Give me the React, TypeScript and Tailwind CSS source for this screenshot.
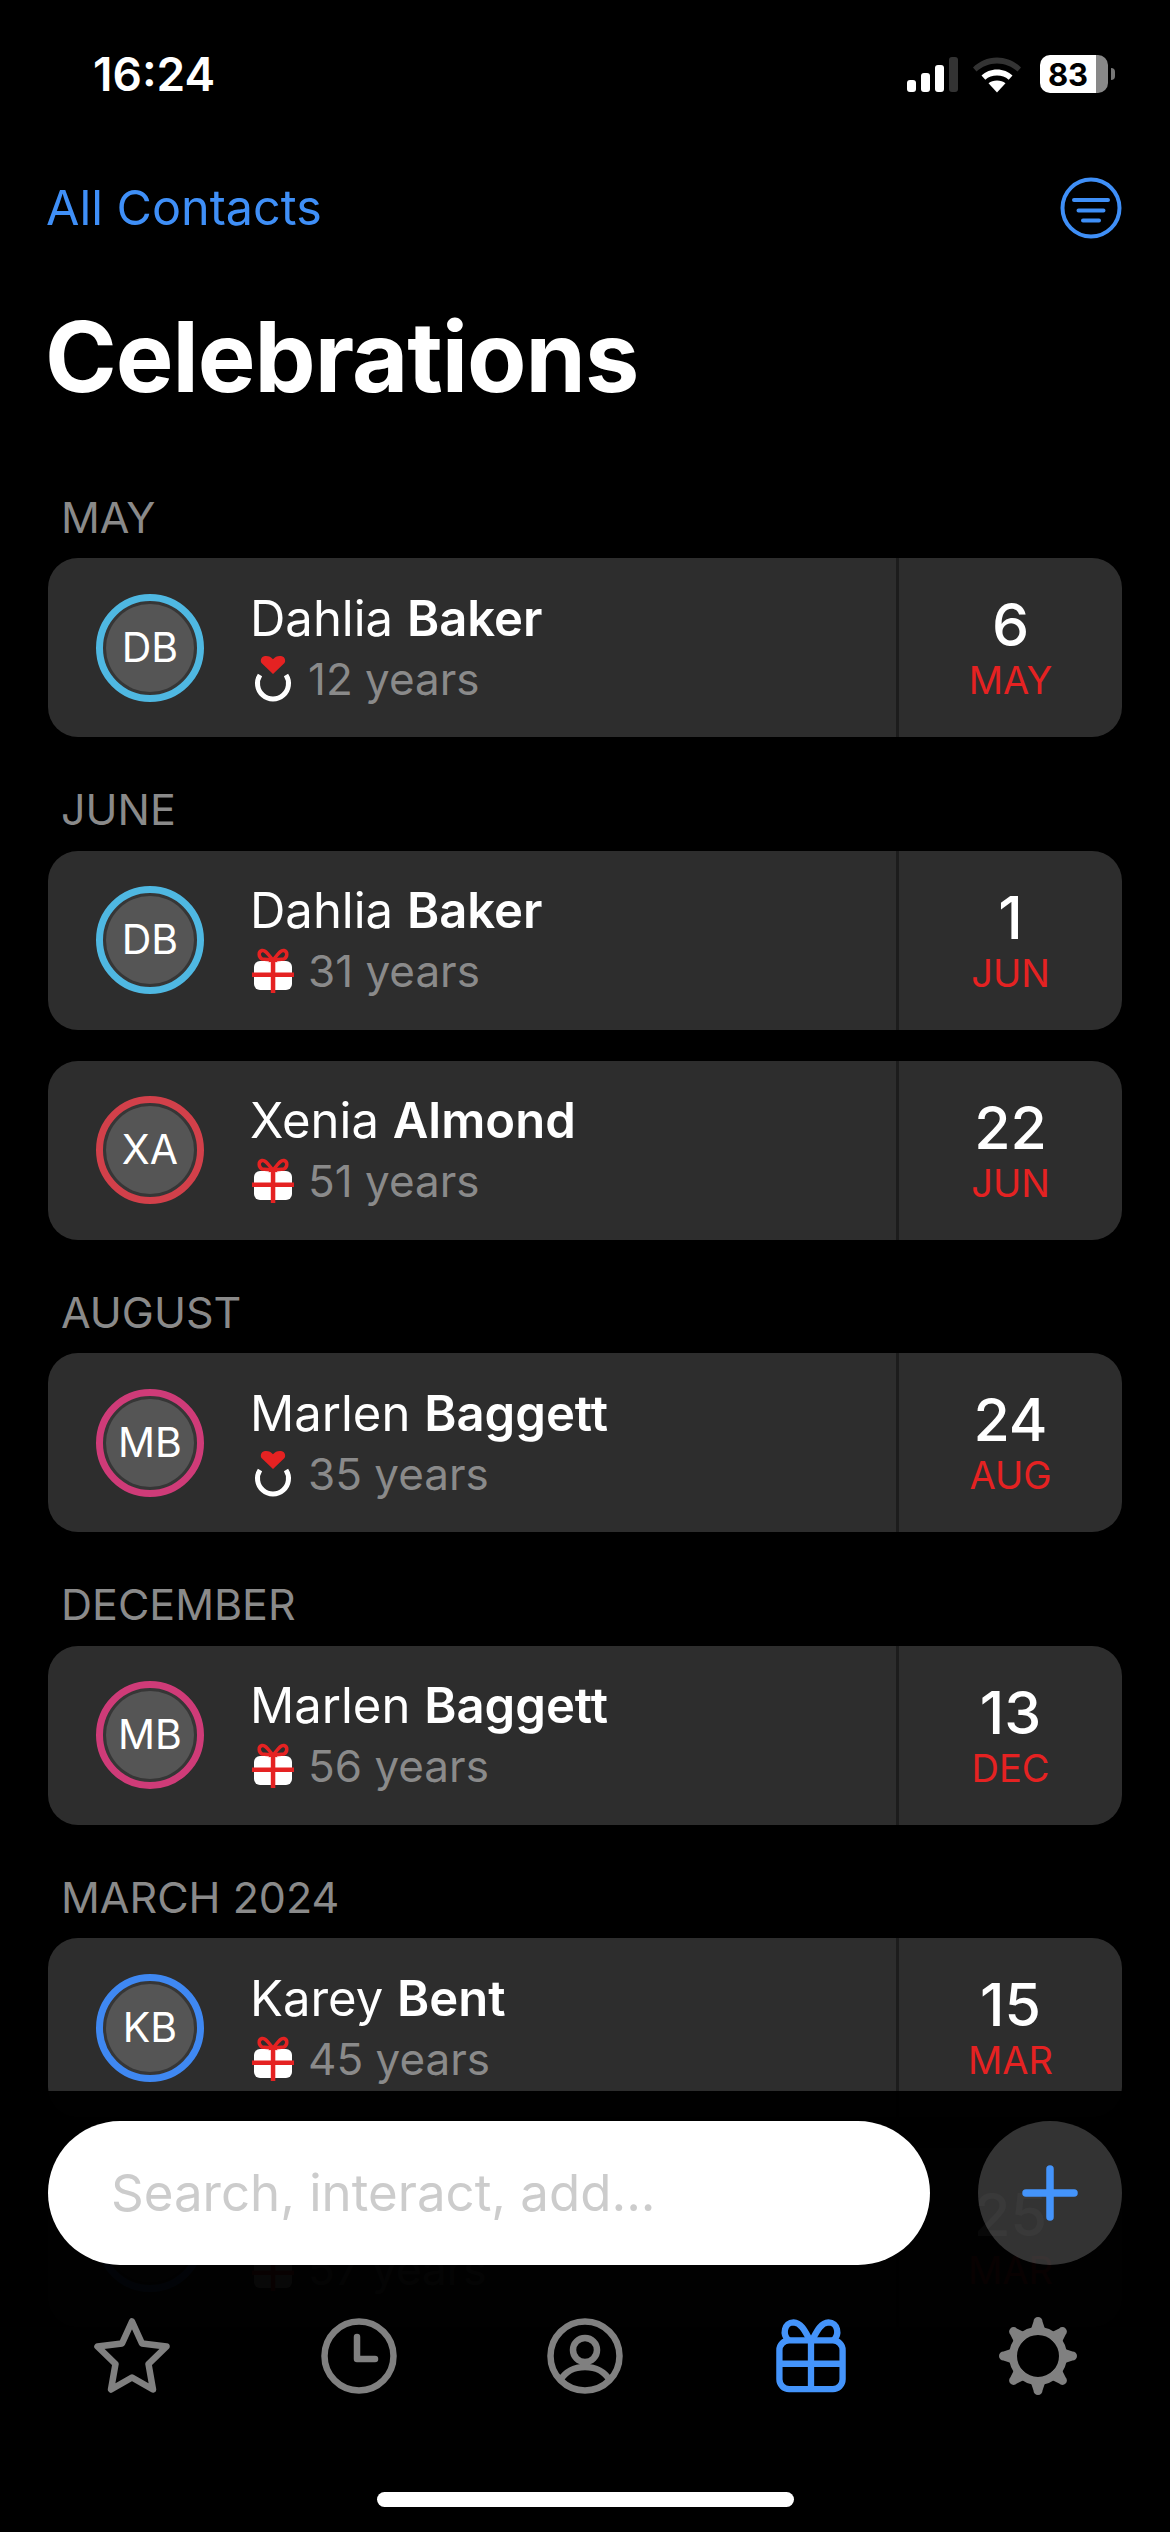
import React from 'react';

const FONT = "font-['Inter','Noto_Sans',sans-serif]";

type Entry = { first: string; last: string; initials: string; ring: string; kind: 'ring' | 'gift'; years: number; day: number; month: string };

const SECTIONS: { title: string; entries: Entry[] }[] = [
  { title: 'MAY', entries: [{ first: 'Dahlia', last: 'Baker', initials: 'DB', ring: 'border-[#4fb8e2]', kind: 'ring', years: 12, day: 6, month: 'MAY' }] },
  {
    title: 'JUNE',
    entries: [
      { first: 'Dahlia', last: 'Baker', initials: 'DB', ring: 'border-[#4fb8e2]', kind: 'gift', years: 31, day: 1, month: 'JUN' },
      { first: 'Xenia', last: 'Almond', initials: 'XA', ring: 'border-[#d2404a]', kind: 'gift', years: 51, day: 22, month: 'JUN' },
    ],
  },
  { title: 'AUGUST', entries: [{ first: 'Marlen', last: 'Baggett', initials: 'MB', ring: 'border-[#cf3b78]', kind: 'ring', years: 35, day: 24, month: 'AUG' }] },
  { title: 'DECEMBER', entries: [{ first: 'Marlen', last: 'Baggett', initials: 'MB', ring: 'border-[#cf3b78]', kind: 'gift', years: 56, day: 13, month: 'DEC' }] },
  {
    title: 'MARCH 2024',
    entries: [
      { first: 'Karey', last: 'Bent', initials: 'KB', ring: 'border-[#3f88f2]', kind: 'gift', years: 45, day: 15, month: 'MAR' },
      // name and initials of this row sit behind the search field
      { first: '', last: '', initials: '', ring: 'border-[#3f88f2]', kind: 'gift', years: 57, day: 25, month: 'MAR' },
    ],
  },
];

function RingIcon() {
  return (
    <svg width="42" height="48" viewBox="0 0 42 48" className="shrink-0">
      <path d="M8 20a15.500 15.500 0 1 0 26 0" fill="none" stroke="#fff" strokeWidth="5" />
      <path d="M21 19 9.500 8C8 6 9 2 12 1.300c3.500-.8 7 .5 9 3 2-2.500 5.500-3.800 9-3 3 .7 4 4.700 2.500 6.700z" fill="#e52222" />
    </svg>
  );
}

function GiftIcon() {
  return (
    <svg width="42" height="48" viewBox="0 0 42 48" className="shrink-0">
      <rect x="2" y="14" width="38" height="29" rx="6" fill="#fff" />
      <path d="M21 13C17 9 14 2.500 10 3.500 6 4.500 6.500 10 10 12zM21 13c4-4 7-10.500 11-9.500 4 1 3.500 6.500 0 8.500z" fill="none" stroke="#e52222" strokeWidth="3.500" />
      <rect x="0" y="25.500" width="42" height="4.500" fill="#e52222" />
      <rect x="18.800" y="13" width="4.500" height="33" fill="#e52222" />
    </svg>
  );
}

function Card({ entry }: { entry: Entry }) {
  return (
    <div className="flex h-[179px] overflow-hidden rounded-[30px] bg-[#2d2d2d]">
      <div className="flex flex-1 items-center pl-[48px]">
        <div className={`flex h-[108px] w-[108px] shrink-0 items-center justify-center rounded-full border-[7px] ${entry.ring} bg-[#363636] p-[3px]`}>
          <div className="flex h-full w-full items-center justify-center rounded-full bg-[#555555] text-[41px] text-white">{entry.initials}</div>
        </div>
        <div className="ml-[46px] flex flex-col pb-[3px]">
          <div className="h-[60px] text-[49px] leading-[60px] text-white">
            {entry.first} <span className="font-semibold">{entry.last}</span>
          </div>
          <div className="mt-[5px] flex h-[50px] items-center gap-[14px] pl-[2px] text-[44px] leading-[50px] text-[#8a8a8a]">
            {entry.kind === 'ring' ? <RingIcon /> : <GiftIcon />}
            <span>{entry.years} years</span>
          </div>
        </div>
      </div>
      <div className="w-[3px] shrink-0 bg-[#1c1c1c]" />
      <div className="flex w-[223px] shrink-0 flex-col items-center pt-[37px]">
        <div className="h-[60px] text-[59px] font-medium leading-[60px] text-white">{entry.day}</div>
        <div className="mt-[3px] h-[44px] text-[38px] leading-[44px] text-[#e52222]">{entry.month}</div>
      </div>
    </div>
  );
}

function StatusIcons() {
  return (
    <div className="flex items-center">
      <svg width="52" height="36" viewBox="0 0 52 36" className="shrink-0">
        <rect x="0" y="24" width="9" height="12" rx="3" fill="#fff" />
        <rect x="14" y="17" width="9" height="19" rx="3" fill="#fff" />
        <rect x="28" y="9" width="9" height="27" rx="3" fill="#fff" />
        <rect x="42" y="1" width="9" height="35" rx="3" fill="#333" />
      </svg>
      <svg width="50" height="38" viewBox="0 0 50 38" className="ml-[13px] shrink-0">
        <path d="M1 12.500C7 6.500 15.500 2.500 25 2.500S43 6.500 49 12.500l-3.500 4C40 11.500 33 8.500 25 8.500S10 11.500 4.500 16.500z" fill="#333" />
        <path d="M9.500 20.500C13.500 16.700 19 14.500 25 14.500s11.500 2.200 15.500 6l-3.800 4.200C33.500 21.800 29.500 20.500 25 20.500s-8.500 1.300-11.700 4.200z" fill="#fff" />
        <path d="M16.500 28.300C18.700 26.500 21.700 25.500 25 25.500s6.300 1 8.500 2.800L25 37.500z" fill="#fff" />
      </svg>
      <div className="ml-[18px] flex h-[38px] w-[68px] items-center justify-center rounded-[10px] bg-[linear-gradient(90deg,#ffffff_82%,#888888_82%)] pr-[12px] text-[31px] font-bold leading-none text-black">83</div>
      <div className="ml-[3px] h-[12px] w-[4px] rounded-r-full bg-[#777777]" />
    </div>
  );
}

function FilterIcon() {
  return (
    <svg width="62" height="62" viewBox="0 0 62 62" fill="none" stroke="#3f8ff7" strokeWidth="4" strokeLinecap="round">
      <circle cx="31" cy="31" r="28.500" />
      <path d="M14 23h34M18.500 33.500h25M23 43.500h16" />
    </svg>
  );
}

function StarIcon() {
  return (
    <svg width="76" height="76" viewBox="0 0 76 76" fill="none" stroke="#808080" strokeWidth="6.500" strokeLinejoin="round">
      <path d="M38 3.500 48 25.500l24.500 3-18 17.500 4.500 25.500-21-12-21 12 4.500-25.500-18-17.500 24.500-3z" />
    </svg>
  );
}

function ClockIcon() {
  return (
    <svg width="76" height="76" viewBox="0 0 76 76" fill="none" stroke="#808080" strokeWidth="6.500" strokeLinecap="round" strokeLinejoin="round">
      <circle cx="38" cy="38" r="34.500" />
      <path d="M36 19v22h18" />
    </svg>
  );
}

function UserIcon() {
  return (
    <svg width="76" height="76" viewBox="0 0 76 76" fill="none" stroke="#808080" strokeWidth="6.500" strokeLinejoin="round">
      <circle cx="38" cy="38" r="34.500" />
      <circle cx="38" cy="32" r="12" />
      <path d="M13.500 62C18 54 27 49 38 49s20 5 24.500 13" />
    </svg>
  );
}

function TabGiftIcon() {
  return (
    <svg width="70" height="74" viewBox="0 0 72 76" fill="none" stroke="#4494fb" strokeWidth="6.500" strokeLinejoin="round">
      <rect x="3.500" y="22" width="65" height="50" rx="10" />
      <path d="M36 22v50M3.500 46h65" />
      <path d="M35 22C31 15 27 4 18 3.500 8.500 3.500 6 16 13 22M37 22c4-7 8-18 17-18.500 9.500 0 12 12.500 5 18.500" />
    </svg>
  );
}

function GearIcon() {
  const angles = [0, 45, 90, 135, 180, 225, 270, 315];
  return (
    <svg width="78" height="78" viewBox="0 0 78 78">
      <circle cx="39" cy="39" r="25" fill="none" stroke="#808080" strokeWidth="8" />
      {angles.map(a => (
        <path key={a} d="M30 18 34.500 4.500a4.500 4.500 0 0 1 9 0L48 18z" fill="#808080" transform={`rotate(${a} 39 39)`} />
      ))}
    </svg>
  );
}

export default function App() {
  return (
    <div className={`${FONT} relative flex h-[2532px] w-[1170px] flex-col overflow-hidden bg-black`}>
      {/* Status bar */}
      <div className="flex h-[148px] shrink-0 items-center justify-between pl-[93px] pr-[55px]">
        <span className="text-[46px] font-semibold text-white">16:24</span>
        <StatusIcons />
      </div>

      {/* Nav */}
      <div className="flex h-[120px] shrink-0 items-center justify-between pl-[46px] pr-[48px]">
        <span className="text-[48.500px] text-[#3f8ff7]">All Contacts</span>
        <FilterIcon />
      </div>

      {/* Title */}
      <div className="flex h-[178px] shrink-0 items-center pl-[45px]">
        <h1 className="text-[97px] font-bold tracking-[-1px] text-white">Celebrations</h1>
      </div>

      {/* List */}
      <div className="mt-[29.500px] flex flex-col gap-[31px] px-[48px]">
        {SECTIONS.map(section => (
          <section key={section.title} className="flex flex-col">
            <div className="flex h-[82.500px] items-center pl-[13px] text-[43px] text-[#8a8a8a]">{section.title}</div>
            <div className="flex flex-col gap-[31px]">
              {section.entries.map(entry => (
                <Card key={`${entry.years}-${entry.day}`} entry={entry} />
              ))}
            </div>
          </section>
        ))}
      </div>

      {/* Dock */}
      <div className="absolute inset-x-0 bottom-0 flex h-[441px] flex-col bg-black/[0.97] px-[48px] pt-[30px]">
        <div className="flex items-center justify-between">
          <div className="flex h-[144px] w-[882px] items-center rounded-[72px] bg-white pl-[63px] text-[51px] text-[#cccccc]">Search, interact, add...</div>
          <div className="flex h-[144px] w-[144px] items-center justify-center rounded-full bg-white/20">
            <svg width="56" height="56" viewBox="0 0 56 56" stroke="#4494fb" strokeWidth="7.500" strokeLinecap="round">
              <path d="M28 4v48M4 28h48" />
            </svg>
          </div>
        </div>
        <div className="mt-[52px] grid grid-cols-5 -mx-[48px] px-[19px]">
          {[<StarIcon key="s" />, <ClockIcon key="c" />, <UserIcon key="u" />, <TabGiftIcon key="g" />, <GearIcon key="t" />].map((icon, i) => (
            <div key={i} className="flex h-[78px] items-center justify-center">{icon}</div>
          ))}
        </div>
        <div className="mx-auto mt-[97px] h-[15px] w-[417px] rounded-full bg-white" />
      </div>
    </div>
  );
}
